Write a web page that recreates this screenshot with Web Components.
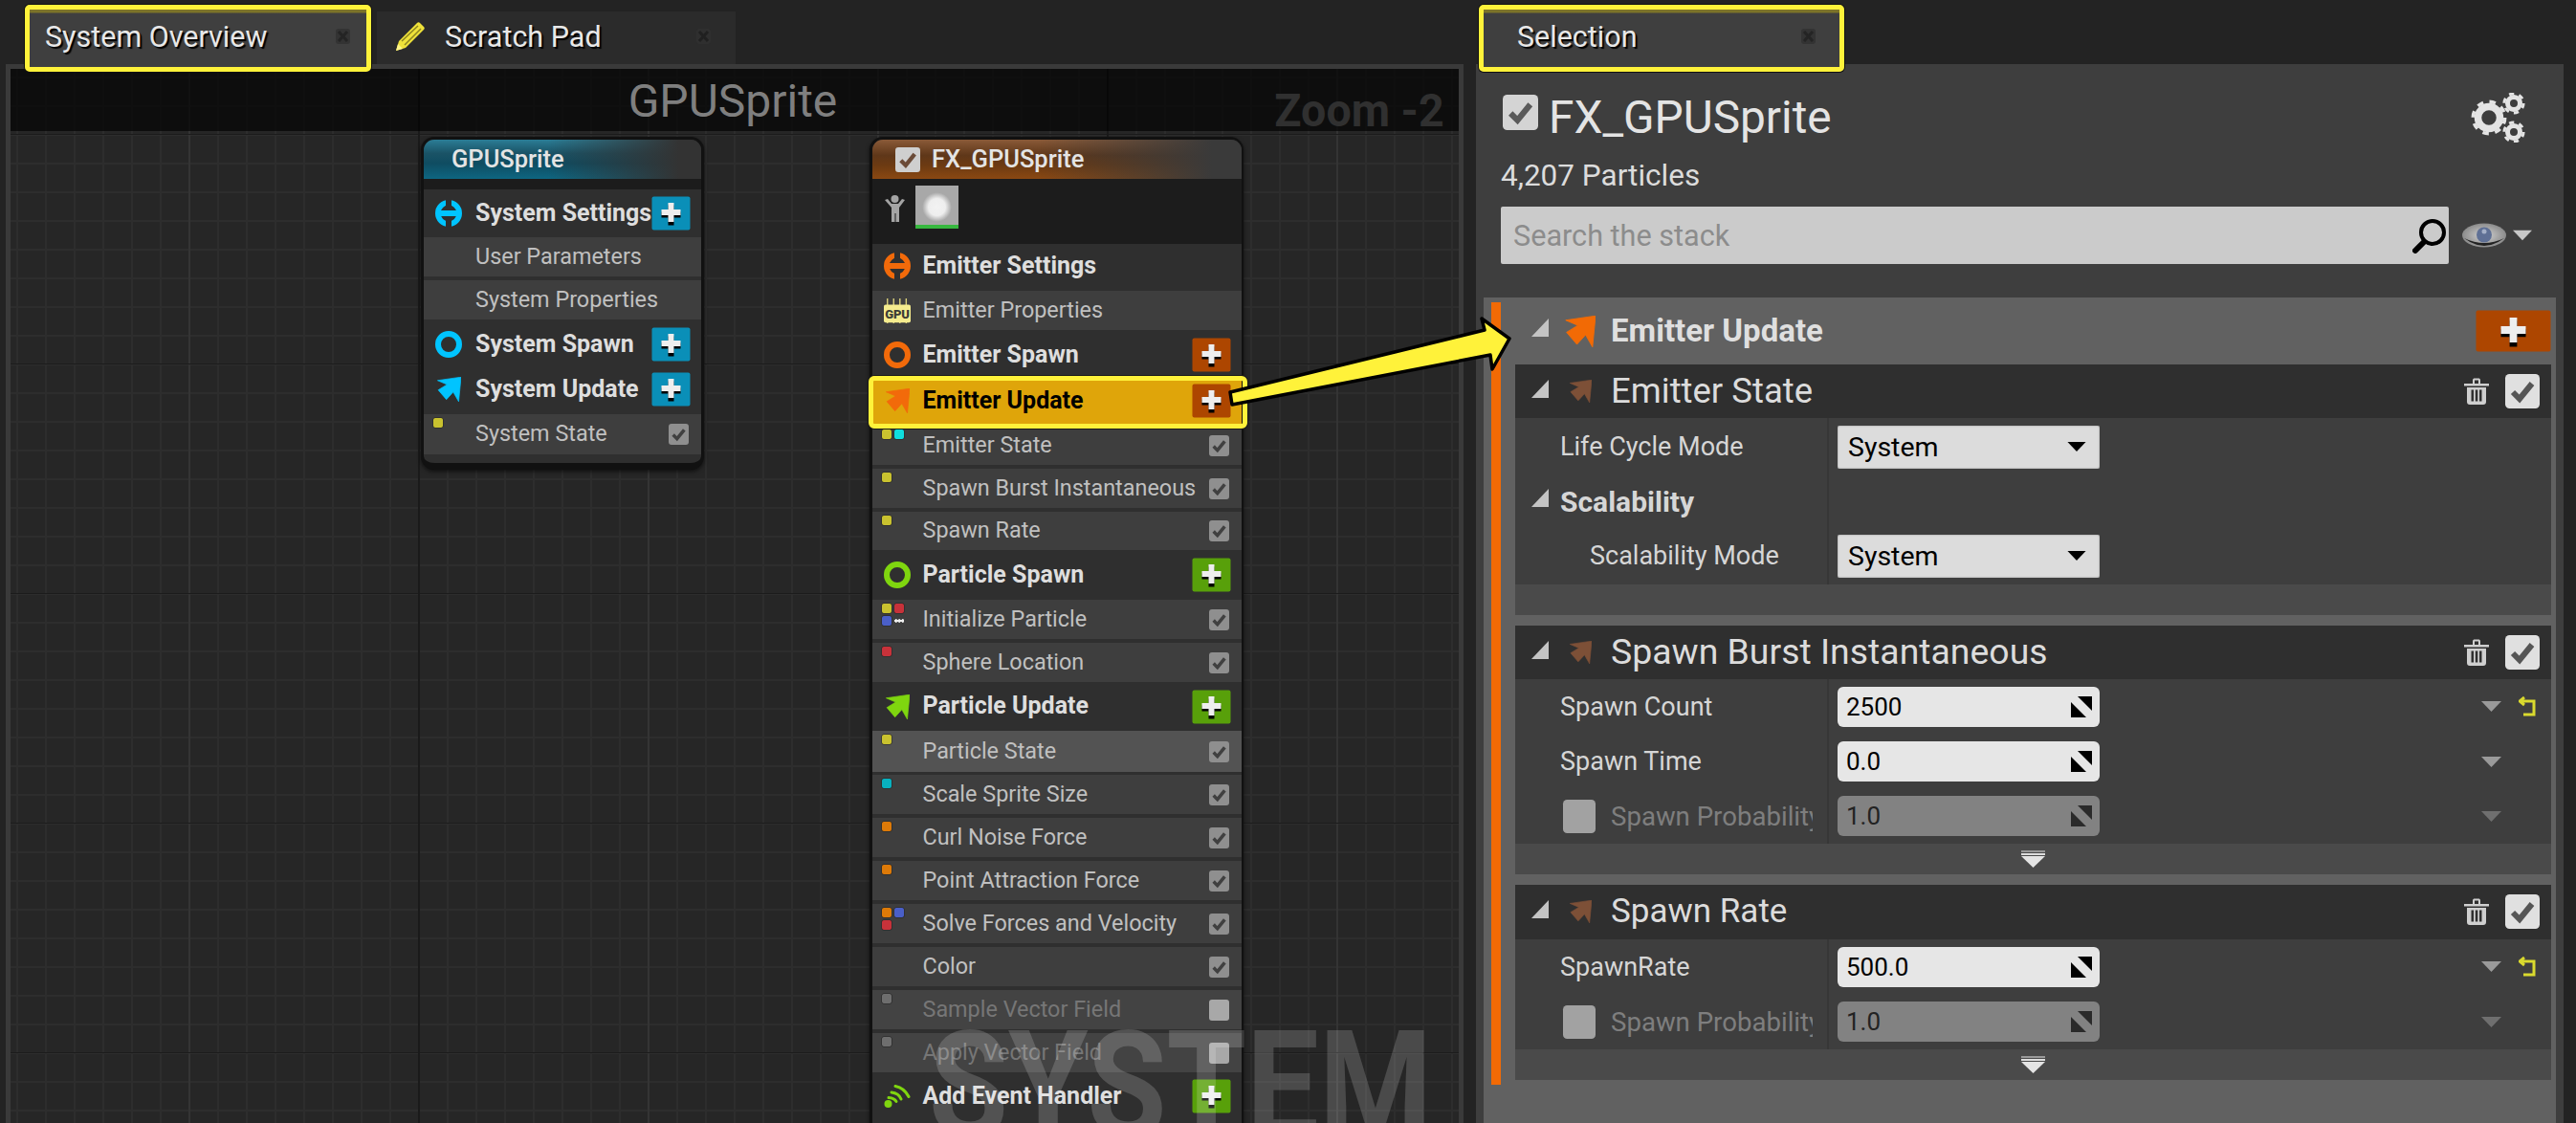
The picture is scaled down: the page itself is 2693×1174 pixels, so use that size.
<!DOCTYPE html>
<html lang="en"><head><meta charset="utf-8"><title>Niagara</title>
<style>
html,body{margin:0;padding:0;background:#232323;height:1174px;overflow:hidden;font-family:Roboto,"Liberation Sans",sans-serif}
</style></head>
<body>
<ue-app>
  <graph-panel slot="graph" title-text="GPUSprite" zoom="Zoom -2">
    <graph-node label="GPUSprite" tint="teal" x="429" w="296" lb="3" rb="3">
      <node-row kind="section" h="50" icon="settings" color="#00c4ff" plus="#0a8fb8">System Settings</node-row>
      <node-row kind="module" h="41" gap="4">User Parameters</node-row>
      <node-row kind="module" h="41">System Properties</node-row>
      <node-row kind="section" h="52" icon="ring" color="#00c4ff" plus="#0a8fb8">System Spawn</node-row>
      <node-row kind="section" h="47" pb="5" icon="arrow" color="#00c4ff" plus="#0a8fb8">System Update</node-row>
      <node-row kind="module" h="42" dots="#c9c22f" check>System State</node-row>
    </graph-node>
    <graph-node label="FX_GPUSprite" tint="brown" x="898" w="391" lb="3" rb="2" emitter>
      <node-row kind="section" h="49" pb="3" icon="settings" color="#f26a0a">Emitter Settings</node-row>
      <node-row kind="module" h="41" icon="gpu">Emitter Properties</node-row>
      <node-row kind="section" h="48" pt="4" icon="ring" color="#f26a0a" plus="#ad4600">Emitter Spawn</node-row>
      <node-row kind="section" h="52" hl icon="arrow" color="#f26a0a" plus="#ad4600">Emitter Update</node-row>
      <node-row kind="module" h="41" gap="4" dots="#c9c22f,#10dede" check>Emitter State</node-row>
      <node-row kind="module" h="41" gap="4" dots="#c9c22f" check>Spawn Burst Instantaneous</node-row>
      <node-row kind="module" h="40" dots="#c9c22f" check>Spawn Rate</node-row>
      <node-row kind="section" h="52" icon="ring" color="#7fd60f" plus="#58a00a">Particle Spawn</node-row>
      <node-row kind="module" h="41" gap="4" dots="#c9c22f,#c8323a,#4a5fc8,more" check>Initialize Particle</node-row>
      <node-row kind="module" h="41" dots="#c8323a" check>Sphere Location</node-row>
      <node-row kind="section" h="51" icon="arrow" color="#7fd60f" plus="#58a00a">Particle Update</node-row>
      <node-row kind="module" h="43" gap="3" light dots="#c9c22f" check>Particle State</node-row>
      <node-row kind="module" h="41" gap="4" dots="#08b1bf" check>Scale Sprite Size</node-row>
      <node-row kind="module" h="41" gap="4" dots="#dd7a08" check>Curl Noise Force</node-row>
      <node-row kind="module" h="41" gap="4" dots="#dd7a08" check>Point Attraction Force</node-row>
      <node-row kind="module" h="41" gap="4" dots="#dd7a08,#4a5fc8,#c8323a" check>Solve Forces and Velocity</node-row>
      <node-row kind="module" h="41" gap="4" check>Color</node-row>
      <node-row kind="module" h="41" gap="4" dim dots="#6e6e6e" check="off">Sample Vector Field</node-row>
      <node-row kind="module" h="41" dim dots="#6e6e6e" check="off">Apply Vector Field</node-row>
      <node-row kind="section" h="60" pb="10" icon="wifi" color="#7fd60f" plus="#58a00a">Add Event Handler</node-row>
    </graph-node>
  </graph-panel>

  <stack-panel slot="side" name="FX_GPUSprite" particles="4,207 Particles" placeholder="Search the stack">
    <stack-card label="Emitter State" fs="36.5" h="56">
      <prop-row label="Life Cycle Mode" h="60" type="enum" value="System"></prop-row>
      <prop-row label="Scalability" h="54" type="group"></prop-row>
      <prop-row label="Scalability Mode" h="60" type="enum" value="System" indent></prop-row>
    </stack-card>
    <stack-card label="Spawn Burst Instantaneous" fs="37.4" h="56" more>
      <prop-row label="Spawn Count" h="57.4" type="num" value="2500" reset></prop-row>
      <prop-row label="Spawn Time" h="57.3" type="num" value="0.0"></prop-row>
      <prop-row label="Spawn Probability" h="57.3" type="num" value="1.0" off></prop-row>
    </stack-card>
    <stack-card label="Spawn Rate" fs="35" h="57" more>
      <prop-row label="SpawnRate" h="57.5" type="num" value="500.0" reset></prop-row>
      <prop-row label="Spawn Probability" h="57.5" type="num" value="1.0" off></prop-row>
    </stack-card>
  </stack-panel>
</ue-app>

<script>
const ICON = {
  settings:c=>`<svg width="28" height="28" viewBox="0 0 28 28"><circle cx="14" cy="14" r="11.2" fill="none" stroke="${c}" stroke-width="5.6"/><rect x="3" y="11" width="22" height="6" fill="${c}"/><rect x="11" y="0" width="6" height="9" fill="var(--rowbg,#2f2f2f)"/><rect x="11" y="19" width="6" height="9" fill="var(--rowbg,#2f2f2f)"/></svg>`,
  ring:c=>`<svg width="28" height="28" viewBox="0 0 28 28"><circle cx="14" cy="14" r="11" fill="none" stroke="${c}" stroke-width="6"/></svg>`,
  arrow:c=>`<svg width="26" height="26" viewBox="0 0 73 72"><polygon points="4,10 73,0 66,72 50,44 30,66 6,38 32,22" fill="${c}" stroke="${c}" stroke-width="2" stroke-linejoin="round"/></svg>`,
  wifi:c=>`<svg width="28" height="26" viewBox="0 0 28 26"><circle cx="4.5" cy="21" r="4" fill="${c}"/><g fill="none" stroke="${c}" stroke-width="3" stroke-linecap="round"><path d="M5 14.5c4 .3 6.5 1.5 8 4"/><path d="M8 9c5 .5 8.500 3 10 7"/><path d="M12 2.500c6 1.200 11 5 14 11"/></g></svg>`,
  gpu:()=>`<svg width="30" height="30" viewBox="0 0 30 30"><g stroke="#d9cf7a" stroke-width="1.500"><path d="M4 1v8M11 1v8M18 1v8M25 1v8M4 25v4M11 25v4M18 25v4M25 25v4"/></g><rect x="0" y="8" width="30" height="20" rx="2" fill="#f5ec8e"/><text x="15" y="23.500" text-anchor="middle" font-family="Roboto,sans-serif" font-weight="900" font-size="14" fill="#3d3d36" letter-spacing="-.2">GPU</text></svg>`,
  plus:(bg,w=41,h=36,s=1)=>`<svg width="${w}" height="${h}" viewBox="0 0 ${w} ${h}" style="display:block"><rect x=".5" y=".5" width="${w-1}" height="${h-1}" rx="2" fill="${bg}"/><g transform="translate(${w/2} ${h/2-1}) scale(${s})"><path d="M-3-10H3V-3H10V3H3V11H-3V3H-10V-3H-3Z" fill="#000" transform="translate(0 2.500)"/><path d="M-3-10H3V-3H10V3H3V10H-3V3H-10V-3H-3Z" fill="#eee"/></g></svg>`,
  tri:(c='#c4c4c4')=>`<svg width="18" height="19" viewBox="0 0 18 19" style="display:block"><polygon points="18,0 18,19 0,19" fill="${c}"/></svg>`,
  down:(c,w=21,h=11)=>`<svg width="${w}" height="${h}" viewBox="0 0 21 11" style="display:block"><polygon points="0,0 21,0 10.500,11" fill="${c}"/></svg>`,
  spin:(c='#000')=>`<svg width="22" height="22" viewBox="0 0 22 22" style="display:block"><polygon points="7,0 22,0 22,15" fill="${c}"/><polygon points="0,6 0,22 16,22" fill="${c}"/></svg>`,
  reset:()=>`<svg width="19" height="22" viewBox="0 0 19 22" style="display:block"><path d="M6 1 1 5l5 4M2 5h14v14H5" fill="none" stroke="#d9d92e" stroke-width="3"/></svg>`,
  trash:()=>`<svg width="26" height="28" viewBox="0 0 26 28" style="display:block"><path d="M0 6h26v2.500H0zM9 6V2.500C9 1 10 .5 11 .5h4c1 0 2 .5 2 2V6h-2V2.500h-4V6zM3 10h20v15c0 2-1 3-3 3H6c-2 0-3-1-3-3zM7.500 12.500v12h2.500v-12zM11.800 12.500v12h2.500v-12zM16 12.500v12h2.500v-12z" fill="#cfcfcf" fill-rule="evenodd"/></svg>`,
  more:()=>`<svg width="25" height="18" viewBox="0 0 25 18" style="display:block"><rect y="0" width="25" height="2" fill="#999"/><rect y="3" width="25" height="2" fill="#ddd"/><polygon points="0,6 25,6 12.500,18" fill="#e4e4e4"/></svg>`,
  gear:(r,t,cx,cy,n,ts)=>{const R=r+t/2+ts/2-.4,d=Math.PI*R/n;return `<circle cx="${cx}" cy="${cy}" r="${r}" fill="none" stroke="#e4e4e4" stroke-width="${t}"/><circle cx="${cx}" cy="${cy}" r="${R}" fill="none" stroke="#e4e4e4" stroke-width="${ts}" stroke-dasharray="${d} ${d}"/>`},
  close:(a='#333',b='#242424')=>`<svg width="15" height="16" viewBox="0 0 15 16" style="display:block"><rect width="15" height="16" rx="3" fill="${a}"/><path d="M3 3l9 10M12 3l-9 10" stroke="${b}" stroke-width="3"/></svg>`
};

function define(name, fn){ customElements.define(name, class extends HTMLElement{
  connectedCallback(){ if(!this.shadowRoot){ this.attachShadow({mode:'open'}).innerHTML = fn(this); } }
}); }

define('ue-check', el=>{
  const s=+el.getAttribute('size')||36, h=+el.getAttribute('h')||s, bg=el.getAttribute('bg')||'#dcdcdc', fg=el.getAttribute('fg')||'#555';
  const off=el.hasAttribute('off');
  return `<style>:host{display:block;width:${s}px;height:${h}px;flex:none}
  div{width:100%;height:100%;background:${bg};border-radius:${Math.max(3,s/8)}px}svg{display:block;width:100%;height:100%}</style>
  <div>${off?'':`<svg viewBox="0 0 36 36"><path d="M8 19l7 7L28 10" fill="none" stroke="${fg}" stroke-width="6"/></svg>`}</div>`;
});

define('ue-tab', el=>{
  const hl=el.hasAttribute('hl'), icon=el.hasAttribute('pencil');
  return `<style>
  :host{display:flex;box-sizing:border-box;align-items:center;flex:none;color:#e8e8e8;font:400 30.5px Roboto,sans-serif;text-shadow:2px 2px 1px #000;
    ${hl?'height:70px;background:linear-gradient(#7d7428 0,#7d7428 3px,#3f3f3f 4px,#3f3f3f 100%);border:5px solid #fff23a;border-radius:5px;box-shadow:0 0 0 1px #111;position:relative;z-index:3;padding:0 17px 4px 16px;':'height:55px;background:#2b2b2b;margin-top:7px;padding:0 26px 3px 19px;margin-left:6px;'}
    width:${el.getAttribute('w')}px}
  .lab{flex:1;white-space:nowrap;padding-left:${icon?'20px':'0'}}
  svg{flex:none;display:block}
  </style>
  ${icon?`<svg width="32" height="32" viewBox="0 0 32 32"><path d="M1 31l3-10L23 2c1-1 2-1 3 0l4 4c1 1 1 2 0 3L11 28z" fill="#efe23a"/><path d="M7 21L24 5M10 25L27 8" stroke="#8c8420" stroke-width="1.500"/><path d="M1 31l2-7 5 5z" fill="#fff58a"/></svg>`:''}
  <span class="lab"><slot></slot></span>${icon?ICON.close('#2f2f2f','#202020'):ICON.close()}`;
});

define('ue-app', el=>`<style>
  :host{display:flex;height:1174px;width:2693px;background:#232323;position:relative;overflow:hidden}
  .left{width:1524px;margin-left:6px;display:flex;flex-direction:column;flex:none}
  .tabs{display:flex;height:67px;padding-left:20px;box-sizing:border-box;flex:none;align-items:flex-start;padding-top:5px}
  .right{width:1137px;margin-left:13px;flex:none;display:flex;flex-direction:column}
  .rtabs{display:flex;height:67px;padding:5px 0 0 3px;box-sizing:border-box;flex:none}
  ::slotted([slot=graph]),::slotted([slot=side]){flex:1;min-height:0}
  .arrow{position:absolute;left:0;top:0;z-index:5;pointer-events:none}
  </style>
  <div class="left"><div class="tabs"><ue-tab hl w="362">System Overview</ue-tab><ue-tab pencil w="375">Scratch Pad</ue-tab></div><slot name="graph"></slot></div>
  <div class="right"><div class="rtabs"><ue-tab hl w="382" style="padding-left:35px;padding-right:25px">Selection</ue-tab></div><slot name="side"></slot></div>
  <svg class="arrow" width="2693" height="1174" viewBox="0 0 2693 1174"><polygon points="1286,410 1288,423 1558,371 1560,386 1578,354 1549,333 1552,345" fill="#fff23a" stroke="#000" stroke-width="3.500" stroke-linejoin="round"/></svg>`);

define('graph-panel', el=>`<style>
  :host{display:block;box-sizing:border-box;position:relative;overflow:hidden;border:5px solid #3a3a3a;border-bottom:0;
    background-color:#262626;
    background-image:
      linear-gradient(to right,#1a1a1a 2px,transparent 2px),
      linear-gradient(to bottom,#1c1c1c 1.5px,transparent 1.5px),
      linear-gradient(to right,#343434 2px,transparent 2px),
      linear-gradient(to right,#2d2d2d 2px,transparent 2px),
      linear-gradient(to bottom,#2d2d2d 2px,transparent 2px);
    background-size:720px 720px,240px 240px,240px 240px,30px 30px,30px 30px;
    background-position:426px 0,0 68px,186px 0,6px 0,0 8px}
  .band{position:absolute;left:0;right:0;top:0;height:65px;background:rgba(0,0,0,.66);display:flex;justify-content:center;align-items:center;color:#7f7f7f;font:400 48px Roboto,sans-serif;box-sizing:border-box}
  .band span{position:relative;left:-2px;top:1px}
  .zoom{position:absolute;right:15px;top:19px;color:#303030;font:700 49px/1 Roboto,sans-serif;transform:scaleX(.95);transform-origin:right}
  .mark{position:absolute;left:960px;top:986px;font:700 155px/1 Roboto,sans-serif;color:rgba(255,255,255,.17);transform:scaleX(.87);transform-origin:left top;white-space:nowrap;z-index:4}
  </style>
  <div class="band"><span>${el.getAttribute('title-text')}</span></div>
  <div class="zoom">${el.getAttribute('zoom')}</div>
  <slot></slot>
  <div class="mark">SYSTEM</div>`);

define('graph-node', el=>{
  const teal=el.getAttribute('tint')==='teal', em=el.hasAttribute('emitter');
  const grad = teal
    ? 'linear-gradient(90deg,transparent 45%,#333 92%),linear-gradient(180deg,#2b7d96 0,#1a5366 35%,#0f4c61 60%,#0e6681 100%)'
    : 'linear-gradient(90deg,transparent 45%,#3a3a3a 92%),linear-gradient(180deg,#8a5a38 0,#5f3719 40%,#6c3a12 65%,#8a4812 100%)';
  return `<style>
  :host{display:block;position:absolute;top:71px;left:${el.getAttribute('x')}px;width:${el.getAttribute('w')}px;box-sizing:border-box;
    border:solid #111;border-width:3px ${el.getAttribute('rb')}px 7px ${el.getAttribute('lb')}px;border-radius:14px;background:#2f2f2f;box-shadow:0 2px 4px rgba(0,0,0,.6);--igap:${em?12.5:14}px}
  .head{height:41px;border-radius:11px 11px 0 0;background:${grad};display:flex;align-items:center;color:#e4e4e4;font:500 25.5px Roboto,sans-serif;padding-left:${em?24:29}px;gap:12px;box-sizing:border-box}
  .head span{position:relative;top:-1px}
  .band{background:#1c1c1c;height:${em?68:11}px;display:flex;align-items:center;padding-left:13px;box-sizing:border-box}
  .thumb{width:45px;height:45px;margin-left:11px;margin-top:-9px;background:radial-gradient(circle at 50% 50%,#f2f2f2 0,#eee 28%,rgba(238,238,238,0) 48%),linear-gradient(#a8a8a8 0 90%,#37b83f 90%)}
  .body{padding-bottom:9px}
  </style>
  <div class="head">${em?'<ue-check size="26" bg="#cfcfcf" fg="#6b4b38"></ue-check>':''}<span>${el.getAttribute('label')}</span></div>
  <div class="band">${em?`<svg width="21" height="30" viewBox="0 0 21 30" style="margin-top:-6px"><circle cx="10.500" cy="5" r="4" fill="#a4a4a4"/><path d="M0 6l3-1 4 5h7l4-5 3 1-6 8v15h-3.500v-9h-1v9H7V14z" fill="#a4a4a4"/></svg><div class="thumb"></div>`:''}</div>
  <div class="body"><slot></slot></div>`;
});

define('node-row', el=>{
  const g=a=>el.getAttribute(a), has=a=>el.hasAttribute(a);
  const sec=g('kind')==='section', hl=has('hl'), light=has('light'), dim=has('dim');
  const bg = hl?'#dfa50a':sec?'#2f2f2f':light?'#535353':dim?'#434343':'#3e3e3e';
  const icon=g('icon');
  const iconHtml = icon ? ICON[icon](g('color')) : '';
  let dots='';
  if(g('dots')) dots = `<div class="dots">`+g('dots').split(',').map(c=> c==='more'?`<i class="m"></i>`:`<i style="background:${c}"></i>`).join('')+`</div>`;
  const chk = has('check') ? (g('check')==='off'?`<ue-check class="c" size="21" h="22" bg="#a8a8a8" off></ue-check>`:`<ue-check class="c" size="21" h="22" bg="#8f8f8f" fg="#404040"></ue-check>`) : '';
  return `<style>
  :host{display:flex;position:relative;box-sizing:border-box;align-items:center;height:${g('h')}px;margin-bottom:${g('gap')||0}px;padding-top:${g('pt')||0}px;padding-bottom:${g('pb')||0}px;background:${bg};--rowbg:${bg};
    color:${hl?'#000':sec?'#dedede':dim?'#767676':'#c0c0c0'};font:${sec?'700 25px':'400 23.4px'} Roboto,sans-serif;${hl?'z-index:2;':''}white-space:nowrap}
  .hl{position:absolute;left:-4px;right:-6px;top:0;height:55px;box-sizing:border-box;border:5px solid #fff23a;border-radius:6px;box-shadow:0 0 0 1px #1a1a1a}
  .ic{width:28px;margin-left:12px;margin-right:var(--igap);flex:none;display:flex;justify-content:center;align-items:center;position:relative}
  .ic svg{display:block}
  .t{flex:1;position:relative;top:-1px}
  .p{flex:none;margin-right:11px;position:relative}
  .c{margin-right:13px}
  .dots{position:absolute;left:10px;top:4px;display:grid;grid-template-columns:10px 10px;gap:3px;z-index:1}
  .dots i{display:block;width:10px;height:10px;border-radius:2px;box-shadow:0 0 0 .5px #222}
  .dots i.m{background:radial-gradient(circle,#eee 1.500px,transparent 2px) 0 50%/3.500px 4px repeat-x;box-shadow:none}
  </style>
  ${hl?'<div class="hl"></div>':''}${dots}
  <div class="ic">${iconHtml}</div><div class="t"><slot></slot></div>
  ${g('plus')?`<div class="p">${ICON.plus(g('plus'))}</div>`:''}${chk}`;
});

define('stack-panel', el=>`<style>
  :host{display:flex;flex-direction:column;background:#3e3e3e;color:#e0e0e0;font-family:Roboto,sans-serif;position:relative}
  .top{display:flex;align-items:flex-start;height:52px;margin-top:30px;padding:0 40px 0 28px;flex:none}
  .top .name{font:400 47.800px/52px Roboto,sans-serif;color:#e4e4e4;margin-left:11px;flex:1}
  .top ue-check{margin-top:2px}
  .count{font:400 31.500px/40px Roboto,sans-serif;margin:15px 0 0 26px;color:#dcdcdc;flex:none;height:39px}
  .search{display:flex;align-items:center;margin:13px 0 0 26px;height:60px;flex:none}
  .box{width:991px;height:60px;box-sizing:border-box;background:#cbcbcb;border-radius:2px;color:#8c8c8c;font:400 30.600px Roboto,sans-serif;display:flex;align-items:center;padding:0 2px 0 13px}
  .box span{flex:1}
  .eye{margin-left:14px}
  .dd{margin-left:7px}
  .stack{flex:1;background:#616161;margin:35px 8px 0;display:flex;min-height:0}
  .bar{width:10px;height:818px;background:#f26a05;margin:5px 0 0 8px;flex:none}
  .col{flex:1;padding-right:5px;min-width:0}
  .hdr{height:70px;display:flex;align-items:center;padding-left:32px;box-sizing:border-box}
  .hdr .tr{margin:-8px 16px 0 0}
  .hdr b{font:700 33px Roboto,sans-serif;color:#dfdfdf;margin-left:16px;flex:1;position:relative;top:-1px}
  .cards{margin-left:15px;display:flex;flex-direction:column;gap:11px}
  </style>
  <div class="top"><ue-check size="37" bg="#d4d4d4" fg="#5a5a5a"></ue-check><div class="name">${el.getAttribute('name')}</div>
    <svg width="57" height="52" viewBox="0 0 57 52">${ICON.gear(11.5,7.5,19,26,8,3.6)}${ICON.gear(6.5,5,45,11,6,3)}${ICON.gear(6.5,5,45,41,6,3)}</svg></div>
  <div class="count">${el.getAttribute('particles')}</div>
  <div class="search"><div class="box"><span>${el.getAttribute('placeholder')}</span>
      <svg width="36" height="37" viewBox="0 0 36 37"><circle cx="21" cy="15" r="12" fill="none" stroke="#000" stroke-width="4"/><path d="M12 25 3 34" stroke="#000" stroke-width="6" stroke-linecap="round"/></svg></div>
    <svg class="eye" width="46" height="26" viewBox="0 0 46 26"><defs><radialGradient id="e"><stop offset="0" stop-color="#d4d4d4"/><stop offset="1" stop-color="#8b8b8b"/></radialGradient></defs><ellipse cx="23" cy="13" rx="23" ry="12.500" fill="url(#e)"/><path d="M2 16Q23 32 44 16Q23 26 2 16Z" fill="#222"/><circle cx="23" cy="12.500" r="8" fill="#5f7095"/><circle cx="23" cy="9" r="2.500" fill="#a3afc7"/></svg>
    <div class="dd">${ICON.down('#c8c8c8',20,12)}</div></div>
  <div class="stack"><div class="bar"></div><div class="col">
    <div class="hdr"><div class="tr">${ICON.tri()}</div>${ICON.arrow('#f26a05').replace('width="26" height="26"','width="33" height="33"')}<b>Emitter Update</b>${ICON.plus('#ad4600',79,44,1.3)}</div>
    <div class="cards"><slot></slot></div></div></div>`);

define('stack-card', el=>`<style>
  :host{display:block;background:#3e3e3e}
  .h{height:${el.getAttribute('h')}px;background:#2f2f2f;display:flex;align-items:center;padding:0 12px 0 17px;color:#dcdcdc;font:400 ${el.getAttribute('fs')}px Roboto,sans-serif}
  .h .tr{margin-bottom:6px;width:18px;flex:none}
  .h svg.a{margin:0 20px 0 21px;flex:none}
  .h .l{flex:1;white-space:nowrap;position:relative;top:-1px}
  .trash{margin-right:17px}
  .f{height:32px;background:#4a4a4a;display:flex;justify-content:center;align-items:center}
  </style>
  <div class="h"><div class="tr">${ICON.tri()}</div>${ICON.arrow('#7d5037').replace('width="26" height="26"','class="a" width="24" height="24"')}<span class="l">${el.getAttribute('label')}</span><div class="trash">${ICON.trash()}</div><ue-check size="36" bg="#e0e0e0" fg="#555"></ue-check></div>
  <slot></slot>
  <div class="f">${el.hasAttribute('more')?ICON.more():''}</div>`);

define('prop-row', el=>{
  const g=a=>el.getAttribute(a), has=a=>el.hasAttribute(a), t=g('type'), off=has('off');
  const group=t==='group', indent=has('indent');
  let val='';
  if(t==='enum') val=`<div class="enum"><span>${g('value')}</span>${ICON.down('#000',20,10)}</div>`;
  if(t==='num') val=`<div class="num${off?' off':''}"><span>${g('value')}</span>${ICON.spin(off?'#2a2a2a':'#000')}</div><div class="end"><div class="d">${ICON.down(off?'#6f6f6f':'#9a9a9a')}</div><div class="r">${has('reset')?ICON.reset():''}</div></div>`;
  return `<style>
  :host{display:grid;grid-template-columns:328px 1fr;height:${g('h')}px}
  .n{box-sizing:border-box;border-right:2px solid #373737;display:flex;align-items:center;white-space:nowrap;overflow:hidden;color:${off?'#7e7e7e':'#d6d6d6'};font:${group?'700 30px':off?'400 27.6px':'400 27px'} Roboto,sans-serif;padding-left:${group?17:off?50:indent?78:47}px}
  .n .tr{margin:-8px 12px 0 0}
  .n .clip{width:211px;overflow:hidden;margin-left:16px}
  .v{display:flex;align-items:center;padding-left:9px;padding-right:15px}
  .enum{box-sizing:border-box;width:274px;height:45px;background:#dcdcdc;border-radius:2px;box-shadow:inset 0 0 2px #888;color:#000;font:400 28.500px Roboto,sans-serif;display:flex;align-items:center;justify-content:space-between;padding:0 14px 0 11px}
  .num{box-sizing:border-box;width:274px;height:42px;background:#e6e6e6;border-radius:6px;color:#000;font:400 26px Roboto,sans-serif;display:flex;align-items:center;justify-content:space-between;padding:0 8px 0 9px}
  .num.off{background:#828282;color:#222}
  .end{margin-left:auto;display:flex;align-items:center;gap:18px}
  .r{width:19px}
  </style>
  <div class="n">${group?`<div class="tr">${ICON.tri()}</div>`:''}${off?`<ue-check size="34" h="35" bg="#a2a2a2" off></ue-check><div class="clip">${g('label')}</div>`:g('label')}</div>
  <div class="v">${val}</div>`;
});
</script>
</body></html>
